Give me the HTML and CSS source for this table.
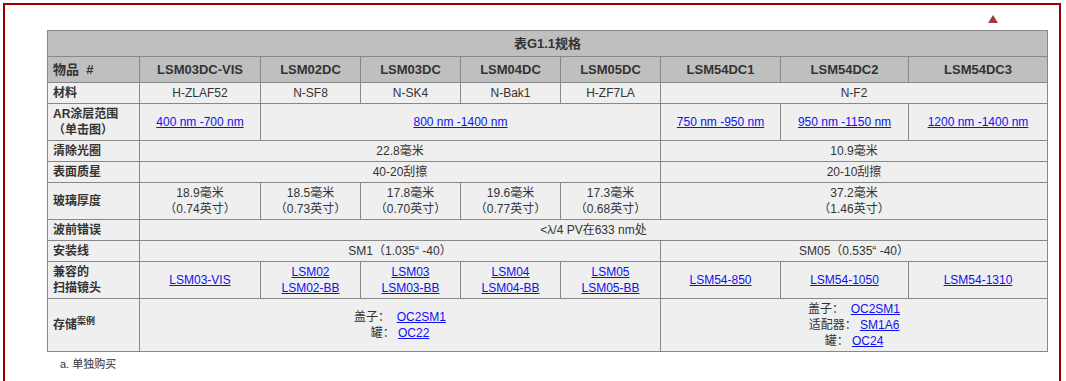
FILE: index.html
```html
<!DOCTYPE html>
<html lang="zh">
<head>
<meta charset="utf-8">
<title>表G1.1规格</title>
<link rel="stylesheet" href="styles.css">
</head>
<body>
<div class="frame">
  <div class="top"><a class="up" href="#" aria-label="top"></a></div>
  <table class="spec">
    <colgroup>
      <col class="c-label"><col class="c1"><col class="c2"><col class="c3"><col class="c4"><col class="c5"><col class="c6"><col class="c7"><col class="c8">
    </colgroup>
    <thead>
      <tr class="title"><th colspan="9">表G1.1规格</th></tr>
      <tr class="head">
        <th class="lbl">物品&nbsp; #</th>
        <th>LSM03DC-VIS</th><th>LSM02DC</th><th>LSM03DC</th><th>LSM04DC</th><th>LSM05DC</th><th>LSM54DC1</th><th>LSM54DC2</th><th>LSM54DC3</th>
      </tr>
    </thead>
    <tbody>
      <tr>
        <th class="lbl">材料</th>
        <td>H-ZLAF52</td><td>N-SF8</td><td>N-SK4</td><td>N-Bak1</td><td>H-ZF7LA</td><td colspan="3">N-F2</td>
      </tr>
      <tr>
        <th class="lbl">AR涂层范围<br>（单击图）</th>
        <td><a href="#">400 nm -700 nm</a></td>
        <td colspan="4"><a href="#">800 nm -1400 nm</a></td>
        <td><a href="#">750 nm -950 nm</a></td>
        <td><a href="#">950 nm -1150 nm</a></td>
        <td><a href="#">1200 nm -1400 nm</a></td>
      </tr>
      <tr>
        <th class="lbl">清除光圈</th>
        <td colspan="5">22.8毫米</td><td colspan="3">10.9毫米</td>
      </tr>
      <tr>
        <th class="lbl">表面质星</th>
        <td colspan="5">40-20刮擦</td><td colspan="3">20-10刮擦</td>
      </tr>
      <tr>
        <th class="lbl">玻璃厚度</th>
        <td>18.9毫米<br>（0.74英寸）</td>
        <td>18.5毫米<br>（0.73英寸）</td>
        <td>17.8毫米<br>（0.70英寸）</td>
        <td>19.6毫米<br>（0.77英寸）</td>
        <td>17.3毫米<br>（0.68英寸）</td>
        <td colspan="3">37.2毫米<br>（1.46英寸）</td>
      </tr>
      <tr>
        <th class="lbl">波前错误</th>
        <td colspan="8">&lt;λ/4 PV在633 nm处</td>
      </tr>
      <tr>
        <th class="lbl">安装线</th>
        <td colspan="5">SM1（1.035“ -40）</td><td colspan="3">SM05（0.535“ -40）</td>
      </tr>
      <tr>
        <th class="lbl">兼容的<br>扫描镜头</th>
        <td><a href="#">LSM03-VIS</a></td>
        <td><a href="#">LSM02</a><br><a href="#">LSM02-BB</a></td>
        <td><a href="#">LSM03</a><br><a href="#">LSM03-BB</a></td>
        <td><a href="#">LSM04</a><br><a href="#">LSM04-BB</a></td>
        <td><a href="#">LSM05</a><br><a href="#">LSM05-BB</a></td>
        <td><a href="#">LSM54-850</a></td>
        <td><a href="#">LSM54-1050</a></td>
        <td><a href="#">LSM54-1310</a></td>
      </tr>
      <tr>
        <th class="lbl">存储<sup>案例</sup></th>
        <td colspan="5">盖子：&nbsp; <a href="#">OC2SM1</a><br>罐： <a href="#">OC22</a></td>
        <td colspan="3">盖子：&nbsp; <a href="#">OC2SM1</a><br>适配器： <a href="#">SM1A6</a><br>罐： <a href="#">OC24</a></td>
      </tr>
    </tbody>
  </table>
  <p class="note">a. 单独购买</p>
</div>
</body>
</html>
```
FILE: styles.css
```css
html, body {
  margin: 0;
  padding: 0;
  background: #fff;
  overflow: hidden;
}
body {
  font-family: "Liberation Sans", Arial, "Noto Sans CJK SC", sans-serif;
  color: #333;
}
.frame {
  margin: 3px 0 0 3px;
  width: 1058px;
  height: 378px;
  border: 2px solid #990000;
  border-bottom: none;
  padding: 10px 0 0 42px;
  box-sizing: border-box;
}
.top {
  height: 15px;
  display: flex;
  justify-content: flex-end;
  padding-right: 61px;
}
.up {
  display: block;
  width: 0;
  height: 0;
  border-left: 5.5px solid transparent;
  border-right: 5.5px solid transparent;
  border-bottom: 8px solid #a33a3a;
}
.spec {
  border-collapse: collapse;
  table-layout: fixed;
  width: 1000px;
  font-size: 12px;
  line-height: 16px;
}
.c-label { width: 92px; }
.c1 { width: 121px; }
.c2, .c3, .c4, .c5 { width: 100px; }
.c6 { width: 120px; }
.c7 { width: 128px; }
.c8 { width: 139px; }
.spec th, .spec td {
  border: 1px solid #888;
  padding: 2px 5px;
  text-align: center;
  vertical-align: middle;
  background: #efefef;
  color: #333;
}
.spec thead th {
  background: #bfbfbf;
  font-size: 13px;
  font-weight: bold;
  height: 21px;
  padding: 2px 5px;
}
.spec th.lbl {
  text-align: left;
  font-weight: bold;
}
.spec tbody th.lbl {
  font-size: 12px;
}
.spec a {
  color: #1010ee;
  text-decoration: underline;
}
.spec sup {
  font-size: 9px;
  line-height: 0;
  vertical-align: 5px;
  font-weight: bold;
}
.note {
  margin: 5px 0 0 13px;
  font-size: 11px;
  line-height: 14px;
  color: #333;
}
```
